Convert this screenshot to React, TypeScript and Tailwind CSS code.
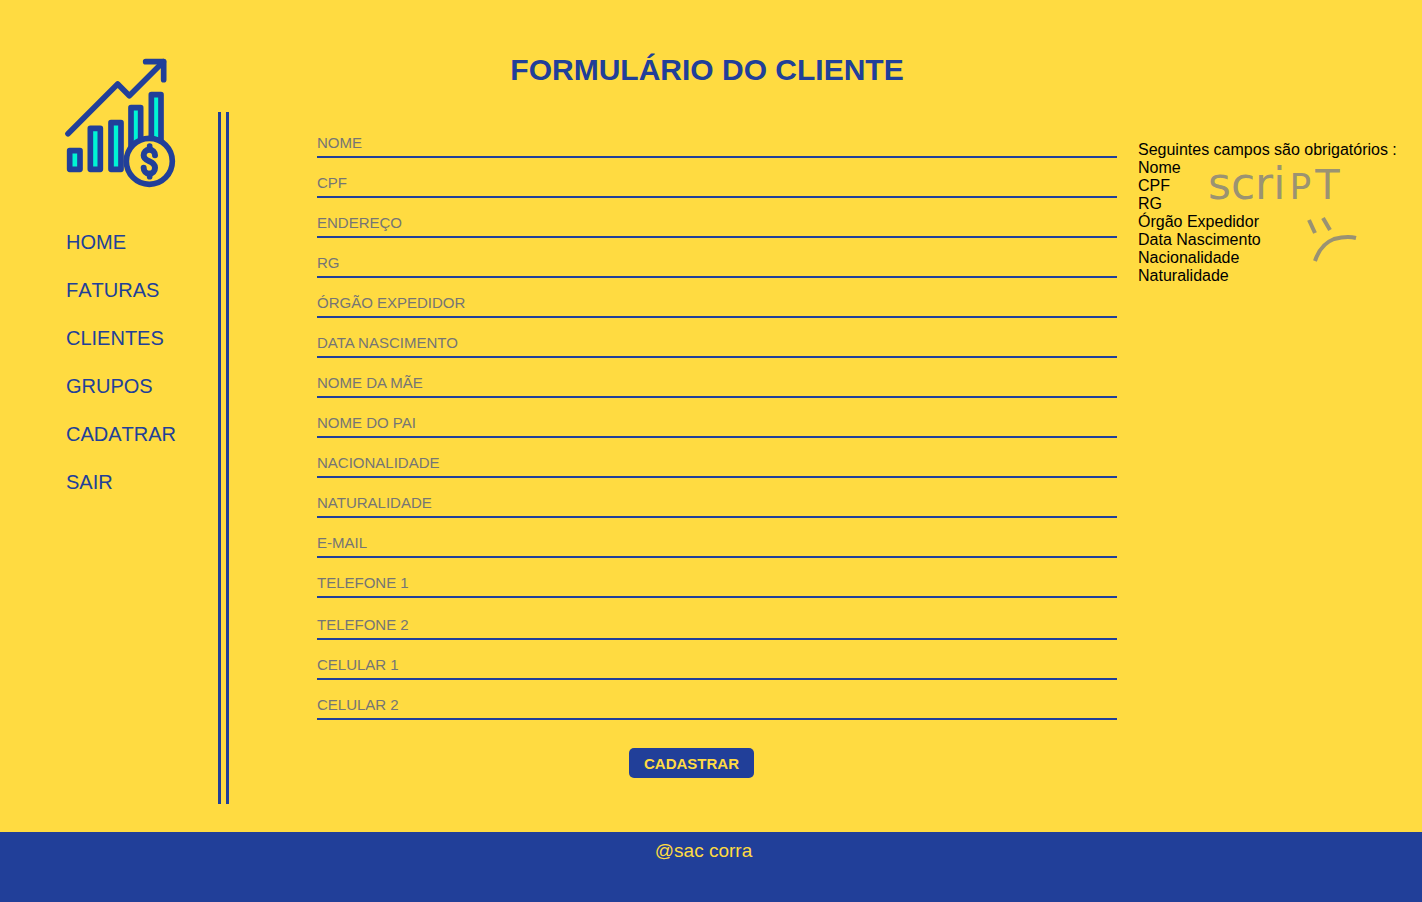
import React from "react";

const menu = ["HOME", "FATURAS", "CLIENTES", "GRUPOS", "CADATRAR", "SAIR"];

const fields = [
  "NOME",
  "CPF",
  "ENDEREÇO",
  "RG",
  "ÓRGÃO EXPEDIDOR",
  "DATA NASCIMENTO",
  "NOME DA MÃE",
  "NOME DO PAI",
  "NACIONALIDADE",
  "NATURALIDADE",
  "E-MAIL",
  "TELEFONE 1",
];

const extraPhones = ["TELEFONE 2", "CELULAR 1", "CELULAR 2"];

const required = [
  "Nome",
  "CPF",
  "RG",
  "Órgão Expedidor",
  "Data Nascimento",
  "Nacionalidade",
  "Naturalidade",
];

function Logo() {
  return (
    <svg
      viewBox="45 36 336 396"
      className="h-[132px] w-[112px]"
      fill="none"
      stroke="#213f99"
      strokeWidth="17"
      strokeLinecap="round"
      strokeLinejoin="round"
      aria-hidden="true"
    >
      <path d="M54 266 203 117l35 35L340 50" />
      <path d="M287 50h54v54" />
      <g fill="#00f5d4">
        <rect x="59" y="317" width="31" height="56" />
        <rect x="121" y="250" width="30" height="123" />
        <rect x="183" y="233" width="30" height="140" />
        <rect x="243" y="188" width="29" height="150" />
        <rect x="304" y="149" width="29" height="180" />
      </g>
      <circle cx="298" cy="349" r="69" fill="#ffdb41" />
      <path d="M299 303v10M299 386v9" />
      <path
        strokeWidth="18"
        d="M315 331c0-10-7-17-17-17s-17 7-17 17c0 22 34 14 34 37 0 10-7 18-17 18s-17-8-17-18"
      />
    </svg>
  );
}

function Field({ name }: { name: string }) {
  return (
    <input
      type="text"
      aria-label={name}
      placeholder={name}
      className="h-[30px] w-full border-b-2 border-[#213f99] bg-transparent p-0 text-[15px] text-[#213f99] outline-none placeholder:text-[#757575]"
    />
  );
}

function Doodle() {
  return (
    <div className="absolute top-[157px] left-[70px] font-['DejaVu_Sans',sans-serif] text-[#808080]/80">
      <p className="flex h-[52px] items-baseline gap-1 text-[44px] leading-[54px]">
        <span>scri</span>
        <span className="text-[36px] leading-[54px]">P</span>
        <span className="text-[40px] leading-[54px]">T</span>
      </p>
      <svg
        viewBox="0 0 52 54"
        className="ml-[99px] h-[54px] w-[52px]"
        fill="none"
        stroke="currentColor"
        strokeWidth="4"
        aria-hidden="true"
      >
        <path d="M2 11l6 13M16 9l7 12" />
        <path d="M8 52C12 40 19 33 27 30c8-2 14-3 22-1" />
      </svg>
    </div>
  );
}

export default function App() {
  return (
    <div className="flex min-h-screen flex-col bg-[#ffdb41] font-['Liberation_Sans',Arial,sans-serif] text-black">
      <div className="flex flex-1">
        <header className="w-[218px] shrink-0 pt-[57px] pl-[65px]">
          <Logo />
          <nav className="mt-[41px] flex flex-col items-start gap-6 pl-px [font-kerning:none]">
            {menu.map((item) => (
              <a key={item} href="#" className="text-[20px] leading-6 text-[#213f99]">
                {item}
              </a>
            ))}
          </nav>
        </header>
        <div className="mt-[112px] mb-7 w-[11px] shrink-0 border-x-3 border-[#213f99]" />
        <main className="min-w-0 flex-1 pt-[52px] pl-[88px]">
          <h1 className="pr-5 text-center text-[30px] leading-9 font-bold text-[#213f99]">
            FORMULÁRIO DO CLIENTE
          </h1>
          <form className="mt-10" onSubmit={(e) => e.preventDefault()}>
            <div className="flex flex-col gap-[10px]">
              {fields.map((name) => (
                <Field key={name} name={name} />
              ))}
            </div>
            <div className="mt-3 flex flex-col gap-[10px]">
              {extraPhones.map((name) => (
                <Field key={name} name={name} />
              ))}
            </div>
            <div className="mt-7 mb-10 flex justify-center pr-[51px]">
              <button
                type="submit"
                className="h-[30px] w-[125px] rounded-[5px] bg-[#213f99] pt-0.5 text-[15px] font-bold text-[#ffdb41]"
              >
                CADASTRAR
              </button>
            </div>
          </form>
        </main>
        <aside className="relative ml-[21px] w-[284px] shrink-0 pt-[141px] text-[16px] leading-[18px]">
          <p>Seguintes campos são obrigatórios :</p>
          <ul>
            {required.map((item) => (
              <li key={item}>{item}</li>
            ))}
          </ul>
          <Doodle />
        </aside>
      </div>
      <footer className="h-[70px] bg-[#213f99] pt-2 pr-[15px] text-center text-[19px] leading-[22px] text-[#ffdb41]">
        @sac corra
      </footer>
    </div>
  );
}
